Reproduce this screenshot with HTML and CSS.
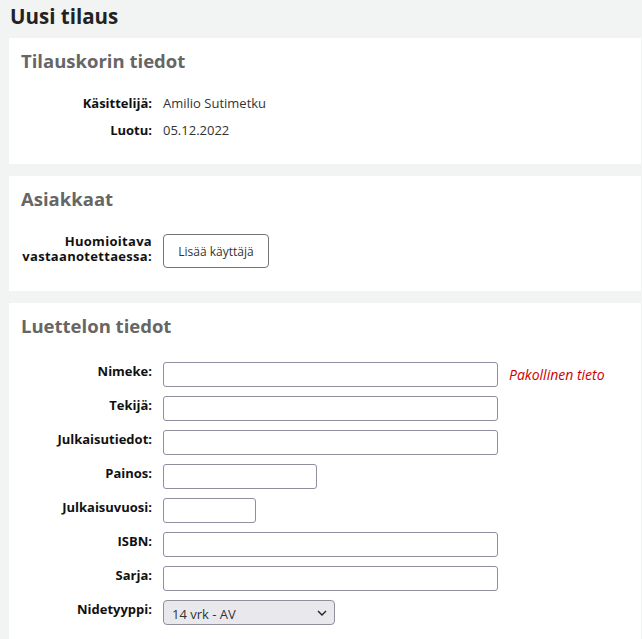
FILE: index.html
```html
<!DOCTYPE html>
<html lang="fi">
<head>
<meta charset="utf-8">
<title>Uusi tilaus</title>
<link rel="stylesheet" href="styles.css">
</head>
<body>
<h1 class="page-title">Uusi tilaus</h1>

<section class="panel">
  <h2 class="panel-title">Tilauskorin tiedot</h2>
  <div class="rows rows-info">
    <div class="row"><span class="label">Käsittelijä:</span><span class="value">Amilio Sutimetku</span></div>
    <div class="row"><span class="label">Luotu:</span><span class="value">05.12.2022</span></div>
  </div>
</section>

<section class="panel panel-customers">
  <h2 class="panel-title">Asiakkaat</h2>
  <div class="rows rows-customers">
    <div class="row"><span class="label label-multi">Huomioitava vastaanotettaessa:</span><span class="value"><button class="btn" type="button">Lisää käyttäjä</button></span></div>
  </div>
</section>

<section class="panel">
  <h2 class="panel-title">Luettelon tiedot</h2>
  <div class="rows rows-form">
    <div class="row"><label class="label" for="f-title">Nimeke:</label><span class="value"><input id="f-title" class="input input-wide" type="text"><span class="required">Pakollinen tieto</span></span></div>
    <div class="row"><label class="label" for="f-author">Tekijä:</label><span class="value"><input id="f-author" class="input input-wide" type="text"></span></div>
    <div class="row"><label class="label" for="f-pub">Julkaisutiedot:</label><span class="value"><input id="f-pub" class="input input-wide" type="text"></span></div>
    <div class="row"><label class="label" for="f-ed">Painos:</label><span class="value"><input id="f-ed" class="input input-mid" type="text"></span></div>
    <div class="row"><label class="label" for="f-year">Julkaisuvuosi:</label><span class="value"><input id="f-year" class="input input-short" type="text"></span></div>
    <div class="row"><label class="label" for="f-isbn">ISBN:</label><span class="value"><input id="f-isbn" class="input input-wide" type="text"></span></div>
    <div class="row"><label class="label" for="f-series">Sarja:</label><span class="value"><input id="f-series" class="input input-wide" type="text"></span></div>
    <div class="row"><label class="label" for="f-type">Nidetyyppi:</label><span class="value"><span class="select-wrap"><select id="f-type" class="select"><option>14 vrk - AV</option></select><svg class="chevron" width="10" height="6" viewBox="0 0 10 6"><path d="M1 1l4 4 4-4" fill="none" stroke="#222" stroke-width="1.4"/></svg></span></span></div>
  </div>
</section>
</body>
</html>
```
FILE: styles.css
```css
* { box-sizing: border-box; }
body {
  margin: 0;
  background: #f2f3f3;
  font-family: "Open Sans", "Noto Sans", sans-serif;
  font-size: 13px;
  color: #222;
}
.page-title {
  margin: 2px 0 8px 10px;
  font-size: 20.5px;
  line-height: 28px;
  font-weight: 700;
  color: #222;
}
.panel {
  background: #fff;
  margin: 0 1px 12px 9px;
  padding: 10px 12px 25px 12px;
}
.panel-customers { padding-bottom: 23px; }
.panel-title {
  margin: 0;
  font-size: 18.5px;
  line-height: 26px;
  font-weight: 700;
  color: #666;
}
.rows {
  display: flex;
  flex-direction: column;
}
.rows-info { margin-top: 20px; gap: 9px; }
.rows-customers { margin-top: 21px; }
.rows-form { margin-top: 23px; gap: 9px; }
.row {
  display: grid;
  grid-template-columns: 131px 1fr;
  column-gap: 11px;
  align-items: start;
}
.label {
  text-align: right;
  font-weight: 700;
  line-height: 18px;
  color: #111;
}
.label-multi {
  line-height: 15px;
  padding-top: 1px;
  letter-spacing: 0.3px;
}
.value {
  line-height: 18px;
  color: #333;
}
.btn {
  height: 34px;
  margin-top: 1px;
  padding: 0 14px;
  width: 106px;
  background: #fff;
  border: 1px solid #767676;
  border-radius: 4px;
  font-family: inherit;
  font-size: 12px;
  color: #333;
}
.input {
  height: 25px;
  border: 1px solid #8f8f9d;
  border-radius: 3px;
  background: #fff;
  font-family: inherit;
  font-size: 13px;
  padding: 0 4px;
  vertical-align: baseline;
}
.input-wide { width: 335px; }
.input-mid { width: 154px; }
.input-short { width: 93px; }
.required {
  margin-left: 11px;
  font-style: italic;
  font-size: 14px;
  color: #cc0000;
}
.select-wrap {
  position: relative;
  display: inline-block;
}
.select {
  appearance: none;
  -webkit-appearance: none;
  width: 172px;
  height: 25px;
  border: 1px solid #8f8f9d;
  border-radius: 4px;
  background: #e9e9ed;
  font-family: inherit;
  font-size: 13px;
  color: #333;
  padding: 3px 8px 0;
}
.chevron {
  position: absolute;
  right: 8px;
  top: 10px;
  pointer-events: none;
}
```
